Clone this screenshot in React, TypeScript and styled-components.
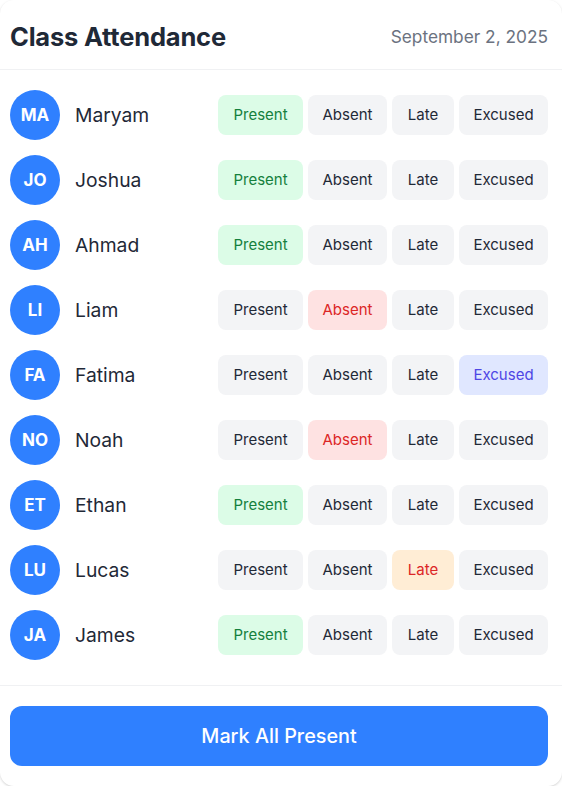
import React, { useState } from "react";
import styled, { createGlobalStyle, css } from "styled-components";

const Global = createGlobalStyle`
  html, body { margin: 0; padding: 0; background: #ffffff; }
  body { font-family: Inter, "Noto Sans", sans-serif; -webkit-font-smoothing: antialiased; }
  * { box-sizing: border-box; }
`;

const Card = styled.div`
  width: 562px;
  height: 786px;
  background: #ffffff;
  border-radius: 14px;
  box-shadow: 0 1px 3px rgba(0, 0, 0, 0.12), 0 1px 2px rgba(0, 0, 0, 0.06);
  display: flex;
  flex-direction: column;
  overflow: hidden;
`;

const Header = styled.div`
  height: 70px;
  padding: 4px 14px 0 10px;
  display: flex;
  align-items: center;
  justify-content: space-between;
  border-bottom: 1px solid #f0f1f3;
`;

const Title = styled.h1`
  margin: 0;
  font-size: 25.5px;
  font-weight: 700;
  color: #1f2937;
  letter-spacing: -0.2px;
`;

const DateText = styled.span`
  font-size: 17.3px;
  color: #6b7280;
`;

const List = styled.div`
  padding: 20px 14px 25px 10px;
  display: flex;
  flex-direction: column;
  gap: 15px;
  border-bottom: 1px solid #f0f1f3;
`;

const Row = styled.div`
  height: 50px;
  display: flex;
  align-items: center;
`;

const Avatar = styled.div`
  width: 50px;
  height: 50px;
  border-radius: 50%;
  background: #2f80ff;
  color: #ffffff;
  font-weight: 700;
  font-size: 17px;
  display: flex;
  align-items: center;
  justify-content: center;
  flex-shrink: 0;
`;

const Name = styled.span`
  margin-left: 15px;
  font-size: 19.3px;
  color: #1f2937;
  flex: 1;
`;

const Options = styled.div`
  display: flex;
  gap: 5px;
`;

type Status = "Present" | "Absent" | "Late" | "Excused";

const activeStyles: Record<Status, ReturnType<typeof css>> = {
  Present: css`background: #dcfce7; color: #15803d;`,
  Absent: css`background: #fee2e2; color: #dc2626;`,
  Late: css`background: #ffedd5; color: #dc2626;`,
  Excused: css`background: #e0e7ff; color: #4f46e5;`,
};

const widths: Record<Status, number> = { Present: 85, Absent: 79, Late: 62, Excused: 89 };

const Option = styled.button<{ $status: Status; $active: boolean }>`
  height: 40px;
  width: ${(p) => widths[p.$status]}px;
  border: none;
  border-radius: 8px;
  font-family: inherit;
  font-size: 15px;
  padding: 0 0 1px;
  cursor: pointer;
  background: #f3f4f6;
  color: #1f2937;
  ${(p) => p.$active && activeStyles[p.$status]}
`;

const Footer = styled.div`
  padding: 20px 14px 0 10px;
`;

const MarkButton = styled.button`
  width: 100%;
  height: 60px;
  border: none;
  border-radius: 12px;
  background: #2f80ff;
  color: #ffffff;
  font-family: inherit;
  font-size: 19.8px;
  font-weight: 500;
  cursor: pointer;
`;

const statuses: Status[] = ["Present", "Absent", "Late", "Excused"];

const initial: { name: string; status: Status }[] = [
  { name: "Maryam", status: "Present" },
  { name: "Joshua", status: "Present" },
  { name: "Ahmad", status: "Present" },
  { name: "Liam", status: "Absent" },
  { name: "Fatima", status: "Excused" },
  { name: "Noah", status: "Absent" },
  { name: "Ethan", status: "Present" },
  { name: "Lucas", status: "Late" },
  { name: "James", status: "Present" },
];

export default function App() {
  const [students, setStudents] = useState(initial);
  const setStatus = (i: number, s: Status) =>
    setStudents((prev) => prev.map((st, j) => (j === i ? { ...st, status: s } : st)));
  return (
    <>
      <Global />
      <Card>
        <Header>
          <Title>Class Attendance</Title>
          <DateText>September 2, 2025</DateText>
        </Header>
        <List>
          {students.map((st, i) => (
            <Row key={st.name}>
              <Avatar>{st.name.slice(0, 2).toUpperCase()}</Avatar>
              <Name>{st.name}</Name>
              <Options>
                {statuses.map((s) => (
                  <Option key={s} $status={s} $active={st.status === s} onClick={() => setStatus(i, s)}>
                    {s}
                  </Option>
                ))}
              </Options>
            </Row>
          ))}
        </List>
        <Footer>
          <MarkButton onClick={() => setStudents((p) => p.map((s) => ({ ...s, status: "Present" })))}>
            Mark All Present
          </MarkButton>
        </Footer>
      </Card>
    </>
  );
}
